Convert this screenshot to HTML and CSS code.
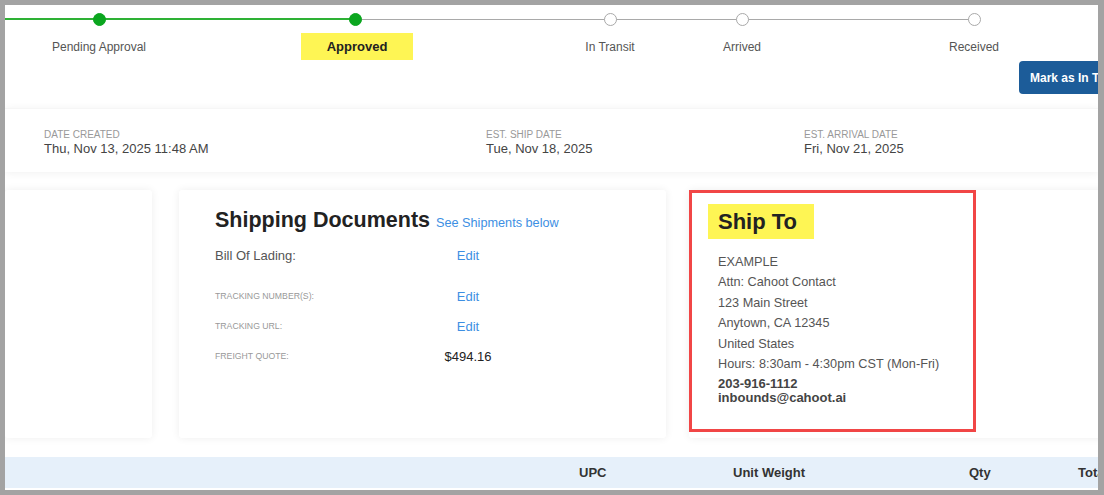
FILE: index.html
```html
<!DOCTYPE html>
<html>
<head>
<meta charset="utf-8">
<link rel="stylesheet" href="styles.css">
</head>
<body>
<div class="page">
  <section class="top">
    <div class="stepper">
      <div class="track"><span class="seg green"></span><span class="seg grey"></span></div>
      <div class="step s1"><span class="dot done"></span><span class="label">Pending Approval</span></div>
      <div class="step s2"><span class="dot done"></span><span class="label current">Approved</span></div>
      <div class="step s3"><span class="dot"></span><span class="label">In Transit</span></div>
      <div class="step s4"><span class="dot"></span><span class="label">Arrived</span></div>
      <div class="step s5"><span class="dot"></span><span class="label">Received</span></div>
    </div>
    <div class="actions"><button class="btn">Mark as In Transit</button></div>
  </section>

  <section class="dates">
    <div class="date c1"><div class="dlabel">DATE CREATED</div><div class="dvalue">Thu, Nov 13, 2025 11:48 AM</div></div>
    <div class="date c2"><div class="dlabel">EST. SHIP DATE</div><div class="dvalue">Tue, Nov 18, 2025</div></div>
    <div class="date c3"><div class="dlabel">EST. ARRIVAL DATE</div><div class="dvalue">Fri, Nov 21, 2025</div></div>
  </section>

  <section class="cards">
    <div class="card card1"></div>
    <div class="card card2">
      <h2 class="title">Shipping Documents <a class="link small">See Shipments below</a></h2>
      <div class="row bill"><span class="rlabel">Bill Of Lading:</span><span class="rvalue link">Edit</span></div>
      <div class="row small-row first"><span class="rlabel caps">TRACKING NUMBER(S):</span><span class="rvalue link">Edit</span></div>
      <div class="row small-row"><span class="rlabel caps">TRACKING URL:</span><span class="rvalue link">Edit</span></div>
      <div class="row small-row"><span class="rlabel caps">FREIGHT QUOTE:</span><span class="rvalue amount">$494.16</span></div>
    </div>
    <div class="card card3">
      <div class="shipto">
        <h2 class="shipto-title">Ship To</h2>
        <div class="addr">
          <div>EXAMPLE</div>
          <div>Attn: Cahoot Contact</div>
          <div>123 Main Street</div>
          <div>Anytown, CA 12345</div>
          <div>United States</div>
          <div>Hours: 8:30am - 4:30pm CST (Mon-Fri)</div>
        </div>
        <div class="contact">
          <div>203-916-1112</div>
          <div>inbounds@cahoot.ai</div>
        </div>
      </div>
    </div>
  </section>

  <section class="thead">
    <span class="th upc">UPC</span>
    <span class="th weight">Unit Weight</span>
    <span class="th qty">Qty</span>
    <span class="th total">Total</span>
  </section>
</div>
</body>
</html>
```

FILE: styles.css
```css
* { box-sizing: border-box; }
html, body { margin: 0; padding: 0; }
body {
  background: #a3a3a3;
  padding: 5px 6px 5px 5px;
  height: 495px;
  width: 1104px;
  font-family: "Liberation Sans", Arial, sans-serif;
  overflow: hidden;
}
.page {
  background: #fff;
  width: 1093px;
  height: 485px;
  overflow: hidden;
}

/* top stepper */
.top { height: 103px; }
.stepper {
  position: relative;
  display: flex;
  padding-top: 8px;
}
.track {
  position: absolute;
  left: 0;
  top: 13px;
  width: 969px;
  height: 2px;
  display: flex;
  align-items: center;
  z-index: 0;
}
.seg { display: block; }
.seg.green { width: 350px; height: 2px; flex-shrink: 0; background: #2eb135; }
.seg.grey { flex: 1; height: 1px; background: #a9a9a9; }
.step {
  flex-shrink: 0;
  display: flex;
  flex-direction: column;
  align-items: center;
  position: relative;
  z-index: 1;
}
.s1 { width: 188px; }
.s2 { width: 324px; }
.s3 { width: 186px; }
.s4 { width: 78px; }
.s5 { width: 386px; }
.dot {
  width: 13px;
  height: 13px;
  border-radius: 50%;
  background: #fff;
  border: 1.5px solid #a9a9a9;
}
.dot.done { background: #0ba61f; border-color: #0ba61f; }
.label {
  margin-top: 7px;
  height: 27px;
  line-height: 29px;
  font-size: 12px;
  color: #555;
  white-space: nowrap;
}
.label.current {
  background: #fef554;
  font-weight: bold;
  font-size: 13px;
  line-height: 27px;
  color: #222;
  width: 112px;
  margin-left: 4px;
  text-align: center;
}
.actions { margin-top: 1px; padding-left: 1014px; display: flex; }
.btn {
  flex-shrink: 0;
  height: 33px;
  padding: 0 11px;
  background: #1c5c99;
  color: #fff;
  border: none;
  border-radius: 4px;
  font-family: "Liberation Sans", Arial, sans-serif;
  font-size: 12px;
  font-weight: bold;
  white-space: nowrap;
}

/* dates */
.dates {
  display: flex;
  height: 64px;
  padding: 20px 0 0 39px;
  box-shadow: 0 1px 8px rgba(0,0,0,0.06);
  border-top: 1px solid #f6f6f6;
}
.date.c1 { width: 442px; }
.date.c2 { width: 318px; }
.dlabel { font-size: 10px; line-height: 12px; color: #999; }
.dvalue { font-size: 13px; line-height: 15px; color: #444; }

/* cards */
.cards {
  display: flex;
  margin-top: 18px;
  height: 248px;
}
.card {
  flex-shrink: 0;
  background: #fff;
  box-shadow: 0 0 8px rgba(0,0,0,0.07);
  border-radius: 3px;
}
.card1 { width: 147px; }
.card2 { width: 487px; margin-left: 27px; padding: 17px 0 0 36px; }
.card3 { width: 430px; margin-left: 23px; }

.title {
  margin: 0;
  font-size: 21.5px;
  line-height: 27px;
  font-weight: bold;
  color: #222;
}
.link { color: #3d8fe3; font-weight: normal; }
.small { font-size: 12.7px; }
.row { display: flex; align-items: center; font-size: 13px; }
.rlabel { width: 206px; color: #555; }
.rvalue { width: 94px; text-align: center; }
.bill { margin-top: 8px; height: 20px; }
.small-row { height: 30px; }
.small-row.first { margin-top: 16px; }
.caps { font-size: 8.7px; color: #999; }
.amount { color: #222; }

/* ship to */
.shipto {
  width: 287px;
  height: 242px;
  border: 3px solid #f14646;
  padding: 11px 0 0 26px;
}
.shipto-title {
  margin: 0 0 0 -10px;
  width: 106px;
  height: 35px;
  line-height: 35px;
  padding-left: 10px;
  background: #fef554;
  font-size: 22px;
  font-weight: bold;
  color: #222;
}
.addr {
  margin-top: 13px;
  font-size: 12.7px;
  line-height: 20.4px;
  color: #555;
}
.contact {
  margin-top: 3px;
  font-size: 13px;
  line-height: 14px;
  font-weight: bold;
  color: #444;
}

/* table header */
.thead {
  display: flex;
  align-items: center;
  margin-top: 19px;
  height: 31px;
  background: #e6f0fa;
  padding-left: 574px;
}
.th {
  flex-shrink: 0;
  font-size: 13px;
  font-weight: bold;
  color: #333;
  white-space: nowrap;
}
.upc { width: 154px; }
.weight { width: 236px; }
.qty { width: 109px; }
```
